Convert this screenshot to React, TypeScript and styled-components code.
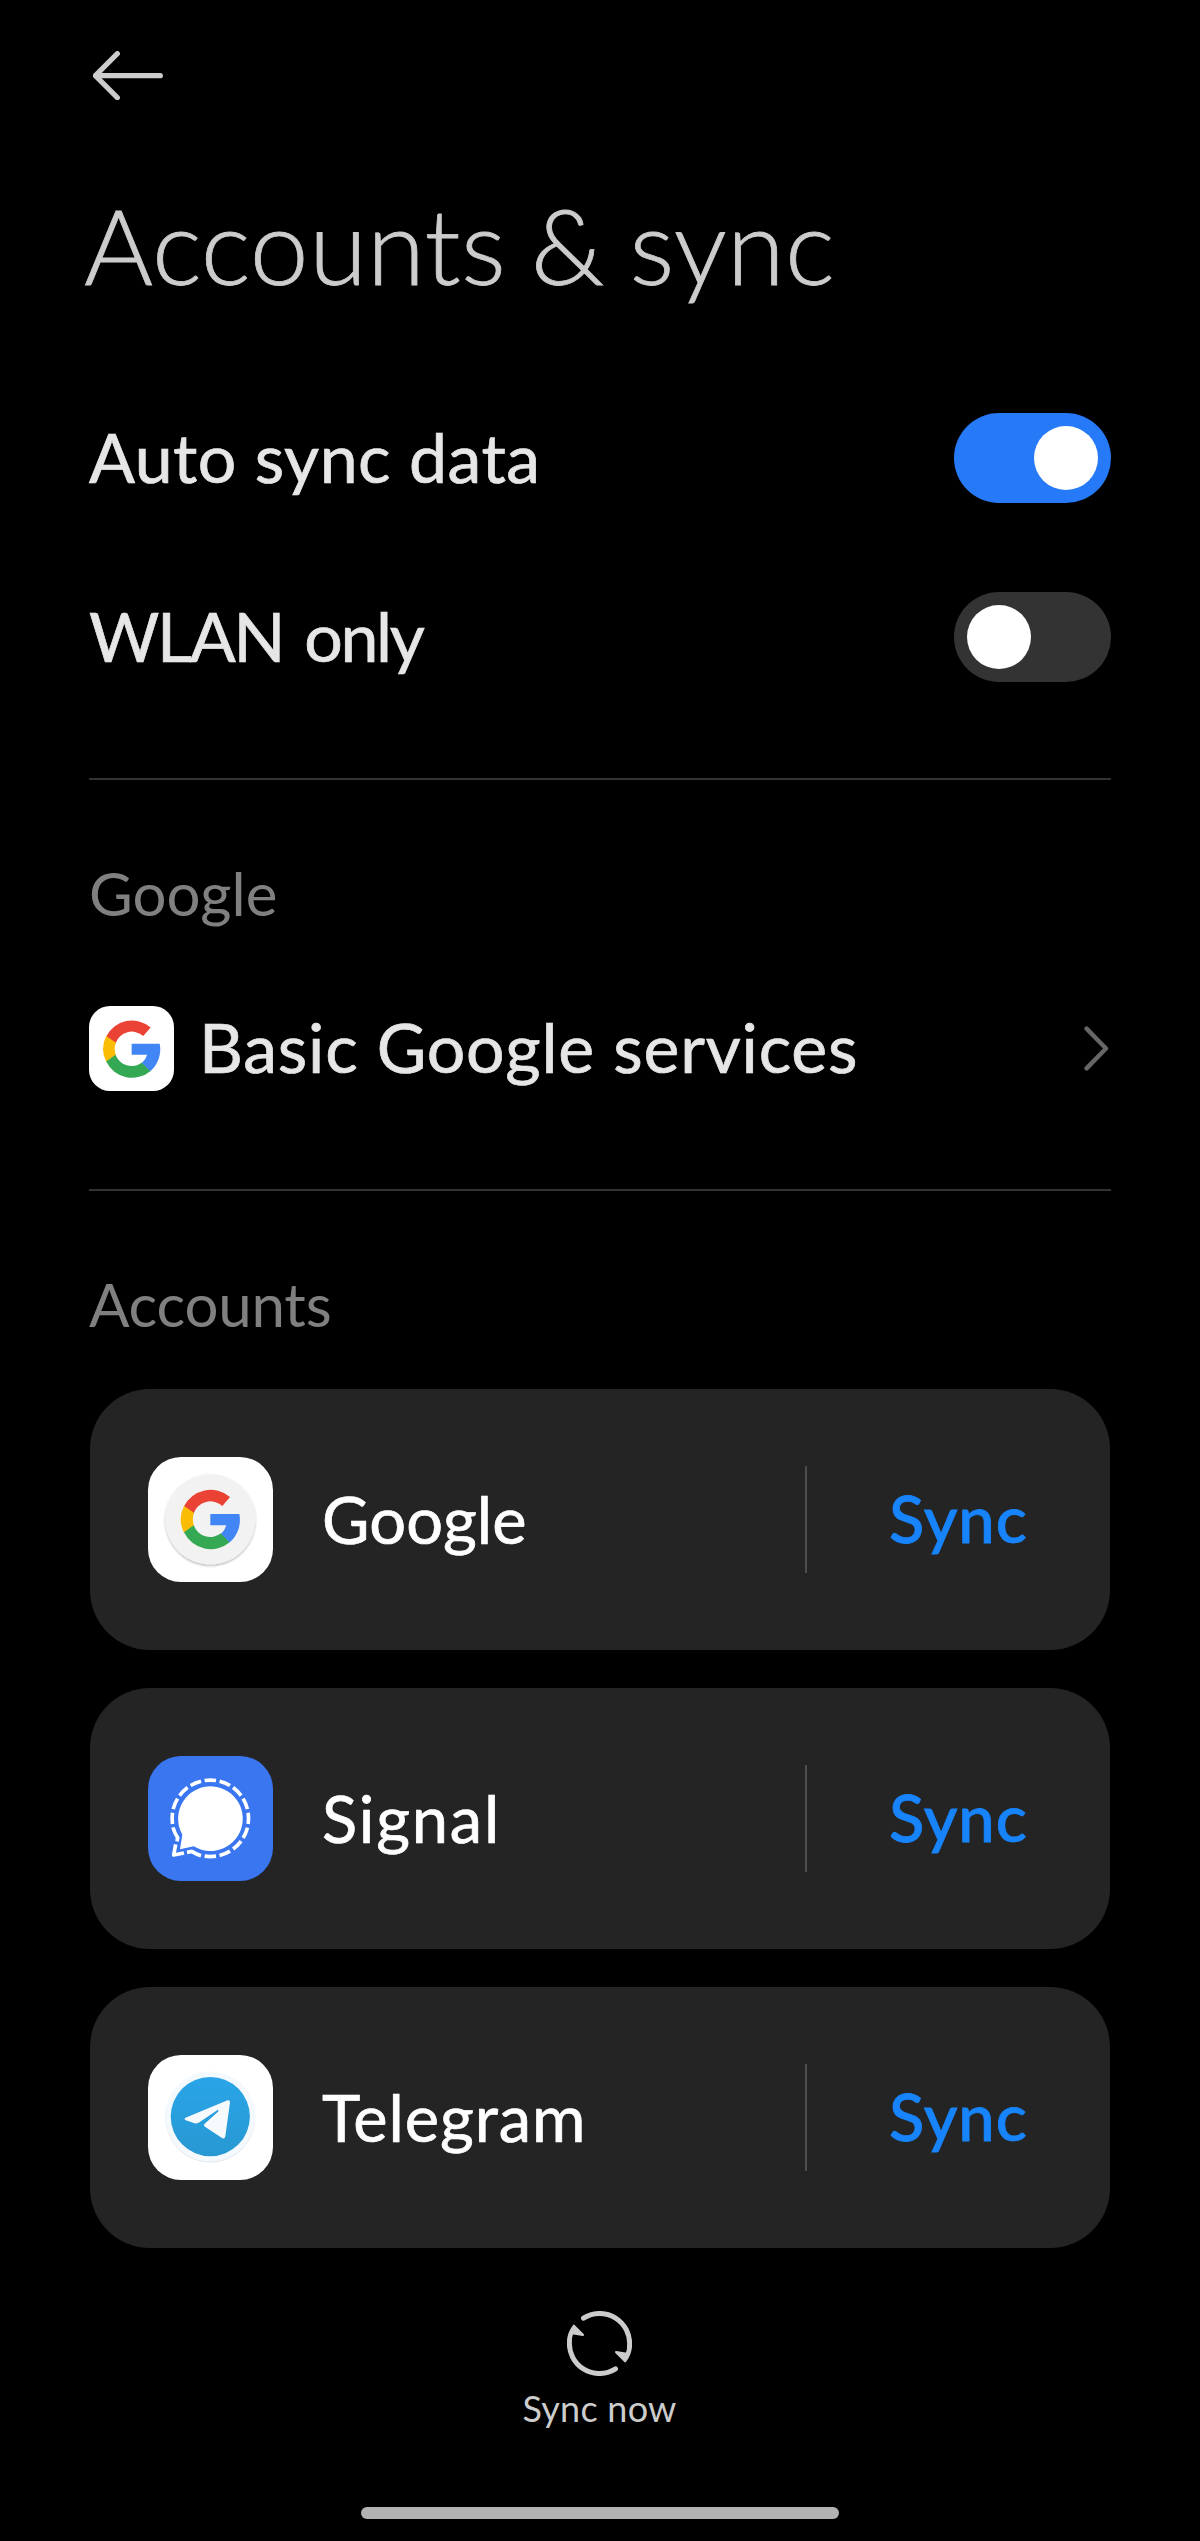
import React from "react";
import styled, { createGlobalStyle } from "styled-components";

const GlobalStyle = createGlobalStyle`
  html, body { margin: 0; padding: 0; background: #000; }
  * { box-sizing: border-box; }
`;

const Screen = styled.div`
  display: flex;
  flex-direction: column;
  width: 1200px;
  height: 2541px;
  padding: 0 89px;
  overflow: hidden;
  background: #000;
  color: #e6e6e6;
  font-family: Lato, "Liberation Sans", sans-serif;
  font-weight: 400;
`;

const TopBar = styled.header`
  flex: none;
  display: flex;
  height: 180px;
  padding: 51px 0 0 4px;
`;

const BackButton = styled.button`
  display: block;
  width: 70px;
  height: 49px;
  padding: 0;
  border: 0;
  background: none;
`;

const Title = styled.h1`
  flex: none;
  margin: 0 0 105px -5px;
  font-size: 105.5px;
  font-weight: 300;
  line-height: 128px;
  letter-spacing: 0.2px;
  word-spacing: -4px;
  color: #ccc;
  white-space: nowrap;
  -webkit-text-stroke: 0.8px currentColor;
`;

const Settings = styled.section`
  flex: none;
  display: flex;
  flex-direction: column;
  gap: 89px;
`;

const SettingRow = styled.div`
  display: flex;
  justify-content: space-between;
  height: 90px;
`;

const RowLabel = styled.span<{ $spacing: number; $line: number; $word?: number }>`
  font-size: 68px;
  line-height: ${(p) => p.$line}px;
  letter-spacing: ${(p) => p.$spacing}px;
  word-spacing: ${(p) => p.$word ?? 0}px;
  white-space: nowrap;
  -webkit-text-stroke: 0.7px currentColor;
`;

const Toggle = styled.button<{ $on: boolean }>`
  display: flex;
  align-items: center;
  justify-content: ${(p) => (p.$on ? "flex-end" : "flex-start")};
  width: 157px;
  height: 90px;
  padding: 0 13px;
  border: 0;
  border-radius: 45px;
  background: ${(p) => (p.$on ? "#277af7" : "#333")};
`;

const Knob = styled.span`
  width: 64px;
  height: 64px;
  border-radius: 50%;
  background: #fff;
`;

const Divider = styled.hr<{ $top: number }>`
  flex: none;
  width: 100%;
  height: 2px;
  margin: ${(p) => p.$top}px 0 77px;
  border: 0;
  background: #333;
`;

const SectionLabel = styled.h2<{ $spacing: number; $after: number }>`
  flex: none;
  margin: 0 0 ${(p) => p.$after}px 0;
  font-size: 60px;
  font-weight: 400;
  line-height: 72px;
  letter-spacing: ${(p) => p.$spacing}px;
  color: #808080;
`;

const ServiceRow = styled.div`
  flex: none;
  display: flex;
  height: 85px;
  padding-right: 2px;
`;

const ServiceIcon = styled.span`
  display: block;
  width: 85px;
  height: 85px;
  margin-right: 25px;
  border-radius: 21px;
  background: #fff;
  overflow: hidden;
`;

const ChevronSlot = styled.span`
  display: flex;
  align-items: center;
  margin-left: auto;
`;

const AccountList = styled.section`
  flex: none;
  display: flex;
  flex-direction: column;
  gap: 38px;
  margin: 0 1px;
`;

const AccountCard = styled.article`
  display: flex;
  align-items: center;
  height: 261px;
  padding-left: 58px;
  border-radius: 60px;
  background: #242424;
`;

const AppIcon = styled.span<{ $bg: string }>`
  display: block;
  flex: none;
  width: 125px;
  height: 125px;
  border-radius: 33px;
  background: ${(p) => p.$bg};
  overflow: hidden;
`;

const AccountName = styled.span<{ $spacing: number }>`
  flex: 1;
  padding: 0 0 1px 49px;
  font-size: 65px;
  line-height: 78px;
  letter-spacing: ${(p) => p.$spacing}px;
  color: #fff;
  -webkit-text-stroke: 0.7px currentColor;
`;

const SyncButton = styled.button`
  display: flex;
  align-items: center;
  width: 305px;
  height: 107px;
  padding: 0 0 3px 82px;
  border: 0;
  border-left: 2px solid #4d4d4d;
  background: none;
  font-family: inherit;
  font-size: 65px;
  font-weight: 500;
  line-height: 78px;
  letter-spacing: 1px;
  color: #1784fc;
  -webkit-text-stroke: 0.8px currentColor;
`;

const SyncNow = styled.button`
  flex: none;
  display: flex;
  flex-direction: column;
  align-items: center;
  gap: 10px;
  margin: 63px 0 77px;
  padding: 0 1px 0 0;
  border: 0;
  background: none;
  font-family: inherit;
  font-size: 36px;
  line-height: 44px;
  letter-spacing: 0.25px;
  color: #ccc;
`;

const HomeBar = styled.div`
  flex: none;
  align-self: center;
  width: 478px;
  height: 12px;
  border-radius: 6px;
  background: #b2b2b2;
`;

const Drawing = styled.svg`
  display: block;
`;

function GoogleG() {
  return (
    <>
      <path fill="#ea4335" d="M-79-39A89 89 0 0 1 59-67L36-40A53 53 0 0 0-50-18Z" />
      <path fill="#fbbc05" d="M-79-40A89 89 0 0 0-79 40L-49 19A53 53 0 0 1-49-19Z" />
      <path fill="#34a853" d="M-79 39A89 89 0 0 0 59 68L32 42A53 53 0 0 1-50 18Z" />
      <path fill="#4285f4" d="M0-16H87A89 89 0 0 1 58 69L32 43Q44 33 48 18H0Z" />
    </>
  );
}

function GoogleBadge() {
  return (
    <Drawing width="125" height="125" viewBox="-187 -187 375 375">
      <defs>
        <filter id="discShadow" x="-20%" y="-20%" width="140%" height="140%">
          <feDropShadow dx="0" dy="4" stdDeviation="2.5" floodOpacity="0.3" />
        </filter>
      </defs>
      <circle r="135" fill="#f2f2f2" filter="url(#discShadow)" />
      <GoogleG />
    </Drawing>
  );
}

const ringAngles = [-90, -67.5, -45, -22.5, 0, 22.5, 45, 67.5, 90, 112.5, 135, 157.5, 180];

function SignalBadge() {
  return (
    <Drawing width="125" height="125" viewBox="-187 -187 375 375">
      <path fill="#fff" d="M-84 49A97 97 0 1 1-50 84L-91 93Z" />
      <g fill="none" stroke="#fff" strokeWidth="11">
        {ringAngles.map((angle) => (
          <path key={angle} d="M-17-113.5A115 115 0 0 1 17-113.5" transform={`rotate(${angle})`} />
        ))}
        <path d="M-112 27Q-108 43-98 58L-100 69" />
        <path d="M-104 78L-110 110L-79 104" strokeLinejoin="round" />
        <path d="M-70 102L-56 99Q-43 107-28 112" />
      </g>
    </Drawing>
  );
}

function TelegramBadge() {
  return (
    <Drawing width="125" height="125" viewBox="0 0 125 125">
      <defs>
        <linearGradient id="telegramBlue" x1="0" y1="0" x2="0" y2="1">
          <stop offset="0" stopColor="#2aa5e8" />
          <stop offset="1" stopColor="#2798d2" />
        </linearGradient>
      </defs>
      <circle cx="62.3" cy="62.4" r="45" fill="#dfe3e6" />
      <circle cx="62.3" cy="61.6" r="45" fill="#f4f9fd" />
      <circle cx="62.3" cy="61.6" r="39.6" fill="url(#telegramBlue)" />
      <path
        fill="#f6fafd"
        d="M37.5 62.8L79 45.4Q82.2 44.5 82 47.5L77.3 81.5Q76.6 84.3 74 83L56.6 71.6Q55.3 70.3 56.4 69L70.3 56.6Q71.2 55 69.5 55.1L51 67.4Q48.8 68.8 46.6 68.3L37.7 65.2Q35.6 64 37.5 62.8Z"
      />
    </Drawing>
  );
}

function BackArrow() {
  return (
    <Drawing width="70" height="49" viewBox="99 93 210 147">
      <path
        d="M301 167H107M172 101L106 167L172 233"
        fill="none"
        stroke="#ccc"
        strokeWidth="15.5"
        strokeLinecap="round"
        strokeLinejoin="round"
      />
    </Drawing>
  );
}

function Chevron() {
  return (
    <Drawing width="25" height="45" viewBox="0 0 25 45">
      <path
        d="M2.6 2.6L22 22.5L2.6 42.4"
        fill="none"
        stroke="#666"
        strokeWidth="4.4"
        strokeLinecap="round"
        strokeLinejoin="round"
      />
    </Drawing>
  );
}

function SyncIcon() {
  const half = (
    <>
      <path d="M-48-76A90 90 0 0 1 90 8" fill="none" stroke="#ccc" strokeWidth="15" strokeLinecap="round" />
      <path
        d="M50 26L82 31Q86 20 87 8L94 8Q93 32 77 53Z"
        fill="#ccc"
        stroke="#ccc"
        strokeWidth="7"
        strokeLinejoin="round"
      />
    </>
  );
  return (
    <Drawing width="65" height="65" viewBox="-97.5 -97.5 195 195">
      <g>{half}</g>
      <g transform="rotate(180)">{half}</g>
    </Drawing>
  );
}

const accounts = [
  { name: "Google", spacing: 0.1, bg: "#fff", icon: <GoogleBadge /> },
  { name: "Signal", spacing: 1.8, bg: "#3a76f0", icon: <SignalBadge /> },
  { name: "Telegram", spacing: 0.9, bg: "#fff", icon: <TelegramBadge /> },
];

export default function App() {
  return (
    <>
      <GlobalStyle />
      <Screen>
        <TopBar>
          <BackButton aria-label="Back">
            <BackArrow />
          </BackButton>
        </TopBar>
        <Title>Accounts &amp; sync</Title>

        <Settings>
          <SettingRow>
            <RowLabel $spacing={0.5} $line={88}>Auto sync data</RowLabel>
            <Toggle $on role="switch" aria-checked="true"><Knob /></Toggle>
          </SettingRow>
          <SettingRow>
            <RowLabel $spacing={-2.3} $word={6} $line={88}>WLAN only</RowLabel>
            <Toggle $on={false} role="switch" aria-checked="false"><Knob /></Toggle>
          </SettingRow>
        </Settings>

        <Divider $top={96} />
        <SectionLabel $spacing={0} $after={77}>Google</SectionLabel>
        <ServiceRow>
          <ServiceIcon>
            <Drawing width="85" height="85" viewBox="-132.5 -133.5 264 264">
              <GoogleG />
            </Drawing>
          </ServiceIcon>
          <RowLabel $spacing={0.8} $line={81}>Basic Google services</RowLabel>
          <ChevronSlot><Chevron /></ChevronSlot>
        </ServiceRow>

        <Divider $top={98} />
        <SectionLabel $spacing={-0.2} $after={49}>Accounts</SectionLabel>
        <AccountList>
          {accounts.map((account) => (
            <AccountCard key={account.name}>
              <AppIcon $bg={account.bg}>{account.icon}</AppIcon>
              <AccountName $spacing={account.spacing}>{account.name}</AccountName>
              <SyncButton>Sync</SyncButton>
            </AccountCard>
          ))}
        </AccountList>

        <SyncNow>
          <SyncIcon />
          <span>Sync now</span>
        </SyncNow>
        <HomeBar />
      </Screen>
    </>
  );
}
